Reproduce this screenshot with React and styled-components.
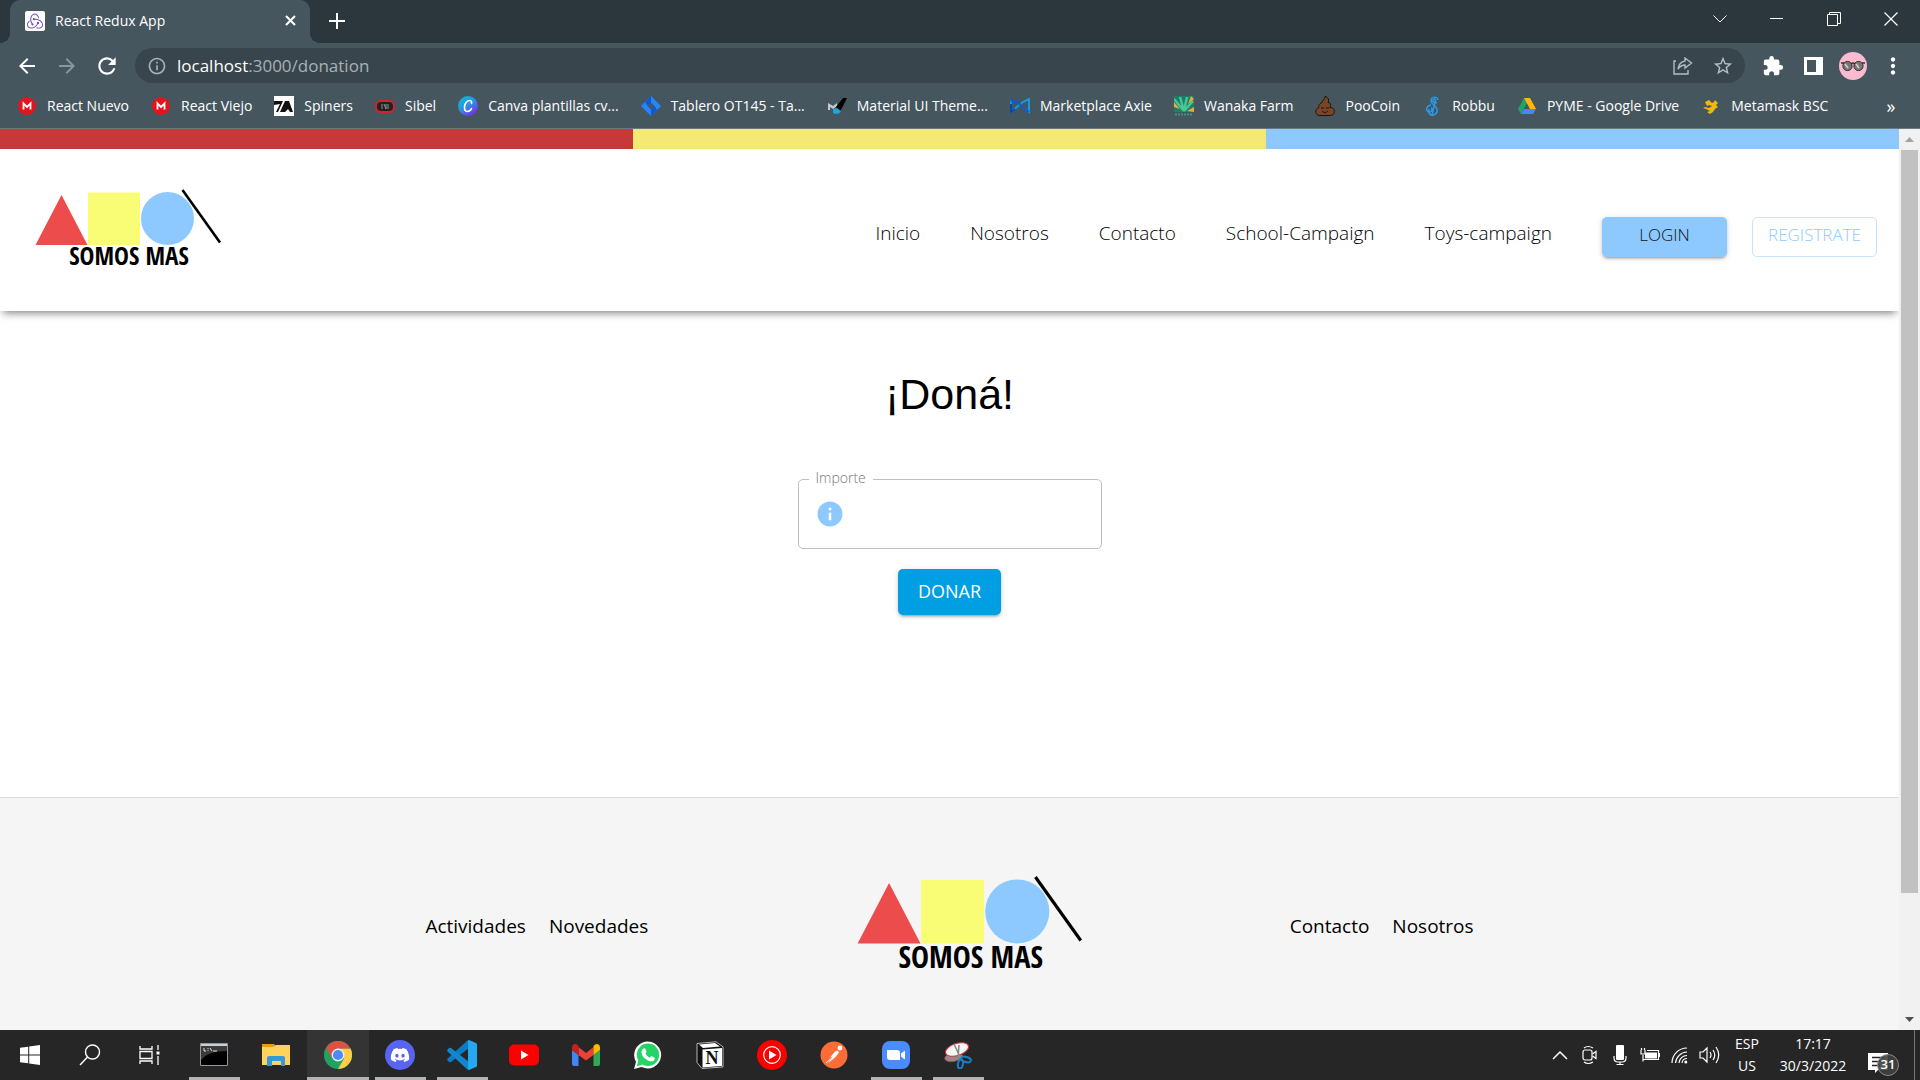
import React from "react";
import styled, { createGlobalStyle, css } from "styled-components";
import {
  MdArrowBack,
  MdArrowForward,
  MdRefresh,
  MdInfoOutline,
  MdInfo,
  MdStarBorder,
  MdExtension,
  MdMoreVert,
} from "react-icons/md";
import { SiRedux } from "react-icons/si";
import { FaDiscord } from "react-icons/fa";

const ui = `"Open Sans", "Noto Sans", sans-serif`;
const site = `"Open Sans", "Noto Sans", sans-serif`;

const GlobalStyle = createGlobalStyle`
  * { box-sizing: border-box; }
  body { margin: 0; background: #fff; overflow: hidden; }
  button, input { font: inherit; }
  button { border: 0; padding: 0; background: none; color: inherit; cursor: pointer; }
  a { color: inherit; text-decoration: none; }
  svg { display: block; flex: none; }
`;

const Screen = styled.div`
  display: flex;
  flex-direction: column;
  height: 100vh;
  font-family: ${ui};
`;

/* ---------- browser ---------- */

const TabStrip = styled.div`
  display: flex;
  align-items: stretch;
  height: 43px;
  padding: 0 1px 0 10px;
  background: #2c373d;
  color: #fff;
`;

const Tab = styled.div`
  position: relative;
  display: flex;
  align-items: center;
  gap: 10px;
  width: 300px;
  padding: 0 12px 2px 15px;
  background: #45565f;
  border-radius: 10px 10px 0 0;
  font-size: 14px;
  &::before,
  &::after {
    content: "";
    position: absolute;
    bottom: 0;
    width: 10px;
    height: 10px;
  }
  &::before {
    left: -10px;
    background: radial-gradient(circle at 0 0, transparent 10px, #45565f 10px);
  }
  &::after {
    right: -10px;
    background: radial-gradient(circle at 100% 0, transparent 10px, #45565f 10px);
  }
`;

const Favicon = styled.span`
  display: grid;
  place-items: center;
  width: 20px;
  height: 20px;
  border-radius: 2px;
  background: #fff;
  color: #764abc;
`;

const TabTitle = styled.span`
  flex: 1;
`;

const IconButton = styled.button`
  display: grid;
  place-items: center;
  width: ${(p) => p.$w || 40}px;
  height: ${(p) => p.$h || 36}px;
  color: ${(p) => p.$color || "#fff"};
`;

const WindowControls = styled.div`
  display: flex;
  margin-left: auto;
`;

const Toolbar = styled.div`
  display: flex;
  align-items: center;
  height: 45px;
  padding: 0 7px;
  background: #45565f;
`;

const Omnibox = styled.div`
  display: flex;
  align-items: center;
  flex: 1;
  height: 35px;
  margin: 0 8px;
  padding: 0 2px 0 12px;
  border-radius: 18px;
  background: #38454c;
  color: #a9b1b5;
  font-size: 17px;
`;

const Url = styled.span`
  flex: 1;
  padding-left: 10px;
  line-height: 24px;
  b { color: #fff; font-weight: 400; }
`;

const Avatar = styled.span`
  display: grid;
  place-items: center;
  width: 28px;
  height: 28px;
  border-radius: 50%;
  background: #f8bbd0;
`;

const Bookmarks = styled.nav`
  display: flex;
  align-items: center;
  gap: 22px;
  height: 41px;
  padding: 0 17px 5px;
  background: #45565f;
  border-bottom: 1px solid #6c7a80;
  color: #fff;
  font-size: 14px;
`;

const Bookmark = styled.a`
  display: flex;
  align-items: center;
  gap: 10px;
  white-space: nowrap;
`;

const More = styled.button`
  width: 24px;
  margin-left: auto;
  font-size: 18px;
`;

const Viewport = styled.div`
  display: flex;
  flex: 1;
  min-height: 0;
`;

const Scrollbar = styled.div`
  display: flex;
  flex-direction: column;
  align-items: center;
  justify-content: space-between;
  width: 21px;
  background: #f1f1f1;
`;

const Thumb = styled.div`
  flex: 1;
  width: 17px;
  margin-bottom: 116px;
  background: #c1c1c1;
`;

/* ---------- page ---------- */

const Page = styled.div`
  flex: 1;
  display: flex;
  flex-direction: column;
  min-width: 0;
  overflow: hidden;
  background: #fff;
  font-family: ${site};
`;

const Stripes = styled.div`
  display: grid;
  grid-template-columns: repeat(3, 1fr);
  height: 20px;
`;

const Stripe = styled.div`
  background: ${(p) => p.$color};
`;

const Header = styled.header`
  display: flex;
  align-items: flex-start;
  justify-content: space-between;
  padding: 41px 22px 40px 35px;
  box-shadow: 0 5px 8px -3px rgba(0, 0, 0, 0.5);
`;

const Nav = styled.nav`
  display: flex;
  gap: 50px;
  padding-top: 27px;
  color: #000;
  font-size: 19px;
  font-weight: 300;
  line-height: 32px;
`;

const Actions = styled.div`
  display: flex;
  gap: 25px;
`;

const shadow = css`
  box-shadow: 0 4px 2px -3px rgba(0, 0, 0, 0.2), 0 2px 3px rgba(0, 0, 0, 0.14), 0 1px 6px rgba(0, 0, 0, 0.12);
`;

const NavButton = styled.button`
  width: 125px;
  height: 40px;
  padding-bottom: 4px;
  border-radius: 5px;
  font-size: 17px;
  line-height: 32px;
  ${(p) =>
    p.$outlined
      ? css`
          border: 1px solid #c6e4ff;
          color: #8dc9ff;
        `
      : css`
          background: #8dc9ff;
          color: #111;
          ${shadow}
        `}
`;

const Main = styled.main`
  display: flex;
  flex-direction: column;
  align-items: center;
  padding: 57px 20px 182px;
`;

const Title = styled.h1`
  margin: 0 0 59px;
  font: 400 43px/52px "Liberation Sans", Arial, sans-serif;
`;

const Form = styled.form`
  display: flex;
  flex-direction: column;
  align-items: center;
  gap: 20px;
`;

const Field = styled.div`
  position: relative;
  display: flex;
  align-items: center;
  gap: 10px;
  width: 304px;
  height: 70px;
  padding: 0 16px;
  border: 1px solid #c0c0c0;
  border-radius: 5px;
  color: #8dc9ff;
`;

const FieldLabel = styled.label`
  position: absolute;
  top: -12px;
  left: 10px;
  padding: 0 7px;
  background: #fff;
  color: #777;
  font-size: 14px;
  font-weight: 300;
  line-height: 20px;
`;

const FieldInput = styled.input`
  flex: 1;
  min-width: 0;
  border: 0;
  outline: 0;
  background: none;
  color: #222;
  font-size: 18px;
`;

const Donate = styled.button`
  height: 46px;
  padding: 0 20px 2px;
  border-radius: 5px;
  background: #009ee3;
  color: #fff;
  font-size: 18px;
  ${shadow}
`;

const Footer = styled.footer`
  flex: 1;
  padding: 79px 0 0;
  border-top: 1px solid #dcdcdc;
  background: #f5f5f5;
`;

const FooterRow = styled.div`
  display: flex;
  align-items: center;
  justify-content: space-between;
  width: 55.2%;
  margin: 0 auto;
  font-size: 19px;
  line-height: 28px;
`;

const FooterLinks = styled.nav`
  display: flex;
  gap: 23px;
`;

/* ---------- taskbar ---------- */

const Taskbar = styled.div`
  display: flex;
  height: 50px;
  background: #262626;
  color: #fff;
  font-size: 14px;
`;

const TaskGroup = styled.div`
  display: flex;
  padding-right: 3px;
`;

const TaskButton = styled.button`
  display: grid;
  place-items: center;
  position: relative;
  width: ${(p) => (p.$system ? 60 : 62)}px;
  background: ${(p) => (p.$active ? "#343434" : "none")};
  ${(p) =>
    p.$running &&
    css`
      &::after {
        content: "";
        position: absolute;
        bottom: 0;
        left: ${p.$active ? 0 : 6}px;
        right: ${p.$active ? 0 : 5}px;
        height: 3px;
        background: #b5b1b4;
      }
    `}
`;

const Tray = styled.div`
  display: flex;
  align-items: center;
  margin-left: auto;
`;

const TrayText = styled.button`
  width: ${(p) => p.$w}px;
  line-height: 22px;
  text-align: center;
`;

const Notifications = styled.button`
  position: relative;
  width: 46px;
  height: 50px;
  margin-right: 11px;
  padding: 15px 0 0 11px;
`;

const Badge = styled.span`
  position: absolute;
  left: 20px;
  top: 24px;
  width: 22px;
  height: 22px;
  border: 1px solid #8a8a8a;
  border-radius: 50%;
  background: rgba(64, 64, 64, 0.9);
  font-size: 13px;
  font-weight: 600;
  line-height: 19px;
`;

const ShowDesktop = styled.button`
  width: 6px;
  height: 50px;
  border-left: 1px solid #777;
`;

/* ---------- drawings ---------- */

const LogoSvg = styled.svg`
  overflow: visible;
`;

const Logo = ({ width }) => (
  <LogoSvg width={width} viewBox="0 0 186 81" role="img" aria-label="Somos Mas">
    <path d="M26.500 5L52.500 55H.5Z" fill="#ed4c4d" />
    <path d="M53 2.500h52v52.500H53Z" fill="#f9fd76" />
    <circle cx="132.500" cy="28.500" r="26.500" fill="#8dc9ff" />
    <path d="M147.500 0L185 52.500" stroke="#000" strokeWidth="2.600" />
    <text x="94" y="75" textAnchor="middle" fontFamily='"Liberation Sans Narrow", "Open Sans Condensed", "Liberation Sans", sans-serif' fontSize="25" fontWeight="700" fill="#000">
      SOMOS MAS
    </text>
  </LogoSvg>
);

const line = { fill: "none", stroke: "currentColor" };

const Mega = () => (
  <svg width="20" height="20" viewBox="0 0 20 20">
    <circle cx="10" cy="10" r="9" fill="#e3141c" />
    <path d="M6.500 13.500V7.500l3.500 3.500 3.500-3.500v6" fill="none" stroke="#fff" strokeWidth="1.800" />
  </svg>
);

const BOOKMARKS = [
  ["React Nuevo", <Mega />],
  ["React Viejo", <Mega />],
  [
    "Spiners",
    <svg width="20" height="20" viewBox="0 0 20 20">
      <path d="M0 0h20v20H0Z" fill="#fff" />
      <path d="M0 5h9l-5 11H2L6 8 0 9ZM11 5h4l4 11h-3l-2-3-3 3H6Z" fill="#111" />
    </svg>,
  ],
  [
    "Sibel",
    <svg width="20" height="20" viewBox="0 0 20 20">
      <rect x="1" y="5" width="18" height="11" rx="5" fill="#222" stroke="#d81f2a" strokeWidth="2" />
      <path d="M7 8v5M9 8l2 5V8M13 8v5" stroke="#8a9499" fill="none" />
    </svg>,
  ],
  [
    "Canva plantillas cv...",
    <svg width="20" height="20" viewBox="0 0 20 20">
      <defs>
        <linearGradient id="canva" x1="0" y1="0" x2="0.700" y2="1">
          <stop offset="0" stopColor="#00c4cc" />
          <stop offset=".55" stopColor="#2f8fe6" />
          <stop offset="1" stopColor="#7d2ae8" />
        </linearGradient>
      </defs>
      <circle cx="10" cy="10" r="10" fill="url(#canva)" />
      <path d="M13.500 7.500c.5-2-.5-3-2-3-3 0-5 3.500-5 7 0 2.500 1.200 4 3 4 1.700 0 3-1 4-2.800" fill="none" stroke="#fff" strokeWidth="1.600" strokeLinecap="round" />
    </svg>,
  ],
  [
    "Tablero OT145 - Ta...",
    <svg width="20" height="20" viewBox="0 0 20 20">
      <path d="M10 0l10 10-10 10L0 10Z" fill="#2684ff" />
      <path d="M10 6.500l3.500 3.500-3.500 3.500L6.500 10Z" fill="#45565f" />
      <path d="M10 0v6.500L6.500 10 4 6ZM10 20v-6.500l3.500-3.500L16 14Z" fill="#1058cc" />
    </svg>,
  ],
  [
    "Material UI Theme...",
    <svg width="20" height="20" viewBox="0 0 20 20">
      <path d="M1 14V7l5 3 4-3v3l-4 3-3-2v3Z" fill="#c4c9cc" />
      <path d="M20 2h-4L9 11l2 4 3-1Z" fill="#000" />
      <path d="M6 13l4-1 4 3c-1 3-5 4-8 2Z" fill="#20a4d8" />
    </svg>,
  ],
  [
    "Marketplace Axie",
    <svg width="20" height="20" viewBox="0 0 20 20" fill="none" strokeWidth="2">
      <path d="M1 4v12l7-6 5-4 6-3v13l-5-4" stroke="#0f9be6" />
      <path d="M1 4l7 2 3 4 8 6M1 4l4 4" stroke="#0a5bd3" />
      <path d="M1 8v8l4-3" stroke="#0748b0" />
    </svg>,
  ],
  [
    "Wanaka Farm",
    <svg width="20" height="20" viewBox="0 0 20 20">
      <path d="M0 0h20v16H0Z" fill="#1d7f66" />
      <path d="M10 15L0 3M10 15L6 1M10 15l3-14M10 15l9-10" stroke="#49c798" strokeWidth="2.400" />
      <path d="M0 6l6 7-6-2ZM17 0l3 3-6 5ZM13 15l7-4v5Z" fill="#f4a63a" />
      <path d="M1 18.500h18" stroke="#2f9c7d" strokeWidth="2" strokeDasharray="2 1" />
    </svg>,
  ],
  [
    "PooCoin",
    <svg width="20" height="20" viewBox="0 0 20 20">
      <path d="M10 .5c4 1 4 4 3 6 3 0 3 3 2 5 4 0 5 3 4 6-1 2-3 2-5 2H5c-5 0-6-6-1-8-1-3 1-4 3-5 0-2 3-3 3-6Z" fill="#7a4524" stroke="#1d120b" />
      <path d="M6 12h3M11 12h3M7 15c2 2 4 2 6 0" fill="none" stroke="#1d120b" />
    </svg>,
  ],
  [
    "Robbu",
    <svg width="20" height="20" viewBox="0 0 20 20" fill="none" stroke="#249ff0" strokeWidth="1.400">
      <path d="M16 4c0-4-7-4-7 1 0 3 5 5 6 8 1 4-3 7-6 6-2-1-3-3-2-6" />
      <path d="M15 7c-3-1-5-1-4-3s4-1 2 2l-3 13M9 9c-5 1-6 6-2 7 3 0 4-3 2-4" />
    </svg>,
  ],
  [
    "PYME - Google Drive",
    <svg width="20" height="20" viewBox="0 0 20 20">
      <path d="M7 2L1 13l3 5 6-11Z" fill="#1fa463" />
      <path d="M7 2h6l6 11h-6Z" fill="#ffba00" />
      <path d="M4 18h12l3-5H7Z" fill="#4688f4" />
    </svg>,
  ],
  [
    "Metamask BSC",
    <svg width="20" height="20" viewBox="0 0 20 20" fill="#f0b90b">
      <path d="M4 6l4-2 3 3 2-1 1-2 3 3-2 2 2 2-3 2-2 3-3 2-3-2 3-1-4-2-3-1 2-1 4 1 3-2-3-1-2 1Z" />
    </svg>,
  ],
];

const Chrome = () => (
  <svg width="28" height="28" viewBox="0 0 28 28">
    <circle cx="14" cy="14" r="14" fill="#1da362" />
    <path d="M14 7.500h12.500A14 14 0 0 1 14 28l6-10.500Z" fill="#ffcd46" />
    <path d="M2 7A14 14 0 0 1 26.500 7.500H14L8 17.500Z" fill="#dd5144" />
    <circle cx="14" cy="14" r="6.400" fill="#f1f1f1" />
    <circle cx="14" cy="14" r="5.100" fill="#4c8bf5" />
  </svg>
);

const Disc = styled.span`
  display: grid;
  place-items: center;
  width: 30px;
  height: 30px;
  border-radius: 50%;
  background: ${(p) => p.$color};
  color: #fff;
`;

const SYSTEM = [
  [
    "Inicio",
    <svg width="20" height="20" viewBox="0 0 20 20" fill="#fff">
      <path d="M0 2.800L8.200 1.700v7.800H0ZM9.200 1.500L20 0v9.500H9.200ZM0 10.500h8.200v7.800L0 17.200ZM9.200 10.500H20V20L9.200 18.500Z" />
    </svg>,
  ],
  [
    "Buscar",
    <svg width="22" height="22" viewBox="0 0 22 22" {...line} strokeWidth="1.400">
      <circle cx="13.500" cy="8" r="7" />
      <path d="M8.500 13L1 21" />
    </svg>,
  ],
  [
    "Vista de tareas",
    <svg width="22" height="20" viewBox="0 0 22 20" {...line} strokeWidth="1.300">
      <path d="M1 1v3h12V1M1 19v-3h12v3M1 6.500h12v7H1ZM19 0v5M19 11v9" />
      <path d="M17.500 6.500h3v3h-3Z" fill="#fff" stroke="none" />
    </svg>,
  ],
];

const APPS = [
  {
    name: "Terminal",
    running: true,
    icon: (
      <svg width="28" height="24" viewBox="0 0 28 24">
        <path d="M.5.5h27v22H.5Z" fill="#000" stroke="#8f969c" />
        <path d="M1 1h26v2H1Z" fill="#c7d0d8" />
        <path d="M1 3h26v5C14 8 6 11 1 17Z" fill="#3b3b3b" />
        <path d="M4 5v3h2M8 5v1M8 7v1M10 5l2 3M13 8h4" {...line} stroke="#ddd" />
      </svg>
    ),
  },
  {
    name: "Explorador",
    icon: (
      <svg width="28" height="24" viewBox="0 0 28 24">
        <path d="M0 1h12l2 2v5H0Z" fill="#e3a008" />
        <path d="M0 4h11l3-2h14v20H0Z" fill="#ffd35c" />
        <path d="M5 23V15q0-2 2-2h14q2 0 2 2v8h-4v-5h-9v5Z" fill="#3a96dd" />
      </svg>
    ),
  },
  { name: "Chrome", running: true, active: true, icon: <Chrome /> },
  { name: "Discord", running: true, icon: <Disc $color="#5865f2"><FaDiscord size={20} /></Disc> },
  {
    name: "Visual Studio Code",
    running: true,
    icon: (
      <svg width="30" height="30" viewBox="0 0 30 30">
        <path d="M22 8L4 22q-1 .7-2 0L.6 20.600q-.8-1 0-2L21 0Z" fill="#0a7bc4" />
        <path d="M22 22L4 8q-1-.7-2 0L.6 9.400q-.8 1 0 2L21 30Z" fill="#1187d2" />
        <path d="M22 0l7 3q1 .5 1 1.500v21q0 1-1 1.500l-7 3q-1 0-1-1V1q0-1 1-1Z" fill="#25a7f2" />
      </svg>
    ),
  },
  {
    name: "YouTube",
    icon: (
      <svg width="30" height="22" viewBox="0 0 30 22">
        <rect y=".5" width="30" height="21" rx="5" fill="#f00" />
        <path d="M12 6.500l7.500 4.500-7.500 4.500Z" fill="#fff" />
      </svg>
    ),
  },
  {
    name: "Gmail",
    icon: (
      <svg width="28" height="22" viewBox="0 0 28 22">
        <path d="M0 6l6.500 5v11H2q-2 0-2-2Z" fill="#4285f4" />
        <path d="M28 6l-6.500 5v11H26q2 0 2-2Z" fill="#34a853" />
        <path d="M6.500 3L14 9l7.500-6v8L14 16.500 6.500 11Z" fill="#ea4335" />
        <path d="M0 3.500C0 .5 3-1 5.500 1l1 1v9L0 6Z" fill="#c5221f" />
        <path d="M28 3.500C28 .5 25-1 22.500 1l-1 1v9L28 6Z" fill="#fbbc04" />
      </svg>
    ),
  },
  {
    name: "WhatsApp",
    icon: (
      <svg width="28" height="28" viewBox="0 0 28 28">
        <path d="M0 28l2-7.200A13.500 13.500 0 1 1 7.500 26Z" fill="#fff" />
        <circle cx="14" cy="13.800" r="11.200" fill="#25d366" />
        <path d="M2.800 25.200l1.700-6 4 4.500Z" fill="#25d366" />
        <path d="M9.500 7.500c1-.6 1.600-.2 2 .8l.9 2.200c.2.700-.3 1.200-1 2 1 2 2.400 3.300 4.500 4.200.9-1.200 1.300-1.800 2-1.500l2.600 1.300c.6.400.3 2-.6 2.900-1.500 1.300-3.500 1.200-6 0-2.800-1.300-5-3.600-6-6-.8-2.200-.4-4.600 1.600-5.900Z" fill="#fff" />
      </svg>
    ),
  },
  {
    name: "Notion",
    icon: (
      <svg width="28" height="28" viewBox="0 0 28 28">
        <path d="M1 2.500L20 .8l7 5V26l-21 1.500-5-6Z" fill="#111" stroke="#ddd" strokeWidth=".8" />
        <path d="M3 3.500l16-1.500 5 3.500L7 7Z" fill="#fff" />
        <path d="M6.500 8.500L26 7v18L6.500 26.500Z" fill="#fff" />
        <text x="16" y="23" textAnchor="middle" fontFamily='"Liberation Serif", serif' fontWeight="700" fontSize="18" fill="#111">N</text>
      </svg>
    ),
  },
  {
    name: "YouTube Music",
    icon: (
      <svg width="30" height="30" viewBox="0 0 30 30">
        <circle cx="15" cy="15" r="15" fill="#f00" />
        <circle cx="15" cy="15" r="8.300" fill="none" stroke="#fff" strokeWidth="1.200" />
        <path d="M12 10.500l7.500 4.500-7.500 4.500Z" fill="#fff" />
      </svg>
    ),
  },
  {
    name: "Postman",
    icon: (
      <svg width="28" height="28" viewBox="0 0 28 28">
        <circle cx="14" cy="14" r="13.500" fill="#ff6c37" />
        <circle cx="20" cy="7" r="2.400" fill="#fff" />
        <path d="M18 9.500l1 2-3 4-8 7 5-7-3 1 5-6Z" fill="#fff" />
        <path d="M6 22l8-7" stroke="#fff" />
      </svg>
    ),
  },
  {
    name: "Zoom",
    running: true,
    icon: (
      <svg width="28" height="28" viewBox="0 0 28 28">
        <rect width="28" height="28" rx="8" fill="#4a8cff" />
        <path d="M5 9h10q3 0 3 3v7H8q-3 0-3-3ZM19 12.500l4-3v9l-4-3Z" fill="#fff" />
      </svg>
    ),
  },
  {
    name: "Recortes",
    running: true,
    icon: (
      <svg width="28" height="28" viewBox="0 0 28 28">
        <ellipse cx="9.500" cy="16" rx="9" ry="4.500" transform="rotate(-12 9.500 16)" fill="#8c8c8c" stroke="#b33" strokeWidth=".7" />
        <ellipse cx="13" cy="8.500" rx="12" ry="6" transform="rotate(-18 13 8.500)" fill="#f5f5f5" stroke="#c33" />
        <path d="M10 3l7 15M15 4l-1 14" stroke="#888" strokeWidth="1.500" />
        <g fill="none" stroke="#1b7fc4" strokeWidth="2">
          <ellipse cx="22" cy="18.500" rx="5" ry="2.600" transform="rotate(15 22 18.500)" />
          <ellipse cx="16.500" cy="23" rx="2.500" ry="4.500" transform="rotate(10 16.500 23)" />
        </g>
      </svg>
    ),
  },
];

const TRAY = [
  ["Mostrar iconos ocultos", <svg width="16" height="10" viewBox="0 0 16 10" {...line} strokeWidth="1.500"><path d="M1 9l7-7 7 7" /></svg>],
  [
    "Cámara",
    <svg width="16" height="20" viewBox="0 0 16 20" {...line} strokeWidth="1.200">
      <rect x="1" y="5" width="9" height="10" rx="2" />
      <path d="M10.500 9l3.500-2.500v7L10.500 11M2 3q4-3 9 0M2 17q4 3 9 0" />
    </svg>,
  ],
  [
    "Micrófono",
    <svg width="14" height="20" viewBox="0 0 14 20" {...line} strokeWidth="1.200">
      <rect x="3" y="0" width="8" height="15" rx="1" fill="#fff" stroke="none" />
      <path d="M1 11v2q0 4 4 4h4q4 0 4-4v-2M7 17v2.500M3.500 19.500h7" />
    </svg>,
  ],
  [
    "Batería",
    <svg width="20" height="16" viewBox="0 0 20 16">
      <path d="M3 14.500V8M1 3v4h4V3M1.500 1v2M4.500 1v2M7 3.500h11.500v9H3" {...line} strokeWidth="1.200" />
      <path d="M5 5.500h12v6H5Z" fill="#fff" />
      <path d="M19 6h1v4h-1Z" fill="#fff" />
    </svg>,
  ],
  [
    "Wi-Fi",
    <svg width="18" height="18" viewBox="0 0 18 18" {...line} strokeWidth="1.200">
      <path d="M1 17A15 15 0 0 1 16 2M4.500 17A12 12 0 0 1 16 6M8 17a8 8 0 0 1 8-7.500M11 17a5 5 0 0 1 5-4.500" />
      <circle cx="14.800" cy="16" r="1.500" fill="#fff" stroke="none" />
    </svg>,
  ],
  [
    "Volumen",
    <svg width="22" height="18" viewBox="0 0 22 18" {...line} strokeWidth="1.200">
      <path d="M1 6h3l4-4v14l-4-4H1ZM11 6q2 3 0 6M14 4q3.500 5 0 10M17 1q5.500 8 0 16" />
    </svg>,
  ],
];

const hash = (e) => e.preventDefault();

export default function App() {
  return (
    <Screen onClick={(e) => e.target.closest("a") && hash(e)}>
      <GlobalStyle />
      <TabStrip>
        <Tab>
          <Favicon><SiRedux size={16} /></Favicon>
          <TabTitle>React Redux App</TabTitle>
          <IconButton $w={16} $h={20} aria-label="Cerrar pestaña">
            <svg width="11" height="11" viewBox="0 0 11 11" {...line} strokeWidth="2"><path d="M1 1l9 9M10 1l-9 9" /></svg>
          </IconButton>
        </Tab>
        <IconButton $w={54} $h={42} aria-label="Nueva pestaña">
          <svg width="16" height="16" viewBox="0 0 16 16" {...line} strokeWidth="2"><path d="M8 0v16M0 8h16" /></svg>
        </IconButton>
        <WindowControls>
          <IconButton $w={57} $h={38} aria-label="Buscar pestañas">
            <svg width="14" height="8" viewBox="0 0 14 8" {...line}><path d="M.5.5L7 7 13.500.5" /></svg>
          </IconButton>
          <IconButton $w={57} $h={38} aria-label="Minimizar">
            <svg width="13" height="2" viewBox="0 0 13 2" {...line}><path d="M0 .5h13" /></svg>
          </IconButton>
          <IconButton $w={57} $h={38} aria-label="Restaurar">
            <svg width="14" height="14" viewBox="0 0 14 14" {...line}><path d="M.5 2.500h10v11H.5ZM2.500 2.500V.5h11V11.500H11" /></svg>
          </IconButton>
          <IconButton $w={57} $h={38} aria-label="Cerrar">
            <svg width="14" height="14" viewBox="0 0 14 14" {...line} strokeWidth="1.200"><path d="M.5.5l13 13M13.500.5l-13 13" /></svg>
          </IconButton>
        </WindowControls>
      </TabStrip>
      <Toolbar>
        <IconButton aria-label="Atrás"><MdArrowBack size={24} /></IconButton>
        <IconButton $color="#8a969c" aria-label="Adelante"><MdArrowForward size={24} /></IconButton>
        <IconButton aria-label="Recargar"><MdRefresh size={26} /></IconButton>
        <Omnibox>
          <MdInfoOutline size={20} />
          <Url><b>localhost</b>:3000/donation</Url>
          <IconButton $color="#b5bcbf" aria-label="Compartir">
            <svg width="20" height="18" viewBox="0 0 20 18" {...line} strokeWidth="1.400">
              <path d="M3 4H1v13h14v-4" />
              <path d="M12 1l6.500 5-6.500 5V8Q8 8 5 12q1-7 7-8Z" />
            </svg>
          </IconButton>
          <IconButton $color="#b5bcbf" aria-label="Favoritos"><MdStarBorder size={22} /></IconButton>
        </Omnibox>
        <IconButton aria-label="Extensiones"><MdExtension size={22} /></IconButton>
        <IconButton aria-label="Panel lateral">
          <svg width="19" height="18" viewBox="0 0 19 18"><path d="M0 0h19v18H0ZM3 3v12h9V3Z" fill="#fff" fillRule="evenodd" /></svg>
        </IconButton>
        <IconButton aria-label="Perfil">
          <Avatar>
            <svg width="24" height="12" viewBox="0 0 24 12">
              <circle cx="6.500" cy="6" r="4.600" fill="#777" stroke="#3d2b2b" strokeWidth="1" />
              <circle cx="17.500" cy="6" r="4.600" fill="#777" stroke="#3d2b2b" strokeWidth="1" />
              <path d="M0 3h3M21 3h3M10 4q2-2 4 0" fill="none" stroke="#3d2b2b" strokeWidth="1.400" />
              <path d="M4 4l3 4M15 4l3 4" stroke="#ccc" strokeWidth="1.800" />
            </svg>
          </Avatar>
        </IconButton>
        <IconButton aria-label="Menú"><MdMoreVert size={26} /></IconButton>
      </Toolbar>
      <Bookmarks>
        {BOOKMARKS.map(([text, icon]) => (
          <Bookmark href="#" key={text}>{icon}{text}</Bookmark>
        ))}
        <More>»</More>
      </Bookmarks>

      <Viewport>
        <Page>
          <Stripes>
            <Stripe $color="#c5393b" />
            <Stripe $color="#f3e974" />
            <Stripe $color="#8dc9ff" />
          </Stripes>
          <Header>
            <Logo width={186} />
            <Nav>
              <a href="#">Inicio</a>
              <a href="#">Nosotros</a>
              <a href="#">Contacto</a>
              <a href="#">School-Campaign</a>
              <a href="#">Toys-campaign</a>
              <Actions>
                <NavButton>LOGIN</NavButton>
                <NavButton $outlined>REGISTRATE</NavButton>
              </Actions>
            </Nav>
          </Header>
          <Main>
            <Title>¡Doná!</Title>
            <Form onSubmit={hash}>
              <Field>
                <FieldLabel htmlFor="importe">Importe</FieldLabel>
                <MdInfo size={30} />
                <FieldInput id="importe" type="text" inputMode="decimal" />
              </Field>
              <Donate type="submit">DONAR</Donate>
            </Form>
          </Main>
          <Footer>
            <FooterRow>
              <FooterLinks>
                <a href="#">Actividades</a>
                <a href="#">Novedades</a>
              </FooterLinks>
              <Logo width={225} />
              <FooterLinks>
                <a href="#">Contacto</a>
                <a href="#">Nosotros</a>
              </FooterLinks>
            </FooterRow>
          </Footer>
        </Page>
        <Scrollbar>
          <IconButton $w={21} $h={21} $color="#a3a3a3" aria-label="Subir">
            <svg width="9" height="5" viewBox="0 0 9 5"><path d="M0 5l4.500-5L9 5Z" fill="currentColor" /></svg>
          </IconButton>
          <Thumb />
          <IconButton $w={21} $h={21} $color="#505050" aria-label="Bajar">
            <svg width="9" height="5" viewBox="0 0 9 5"><path d="M0 0l4.500 5L9 0Z" fill="currentColor" /></svg>
          </IconButton>
        </Scrollbar>
      </Viewport>

      <Taskbar>
        <TaskGroup>
          {SYSTEM.map(([name, icon]) => (
            <TaskButton $system key={name} aria-label={name}>{icon}</TaskButton>
          ))}
        </TaskGroup>
        {APPS.map((a) => (
          <TaskButton key={a.name} aria-label={a.name} $running={a.running} $active={a.active}>{a.icon}</TaskButton>
        ))}
        <Tray>
          {TRAY.map(([name, icon]) => (
            <IconButton key={name} $w={30} $h={50} aria-label={name}>{icon}</IconButton>
          ))}
          <TrayText $w={44}>ESP<br />US</TrayText>
          <TrayText $w={88}>17:17<br />30/3/2022</TrayText>
          <Notifications aria-label="31 notificaciones">
            <svg width="20" height="20" viewBox="0 0 20 20">
              <path d="M0 0h20v17H10l-3 3v-3H0Z" fill="#fff" />
              <path d="M4 4.500h12M4 8.500h12M4 12.500h8" stroke="#262626" strokeWidth="1.300" />
            </svg>
            <Badge>31</Badge>
          </Notifications>
          <ShowDesktop aria-label="Mostrar escritorio" />
        </Tray>
      </Taskbar>
    </Screen>
  );
}
